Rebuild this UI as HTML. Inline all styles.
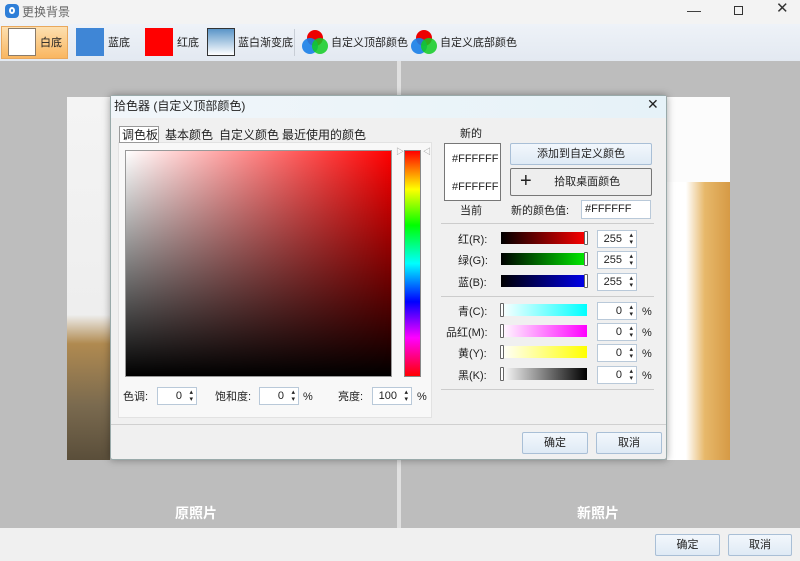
<!DOCTYPE html><html><head><meta charset="utf-8"><style>
*{margin:0;padding:0;box-sizing:border-box}
body{width:800px;height:561px;position:relative;overflow:hidden;font-family:"Liberation Sans","Noto Sans CJK SC",sans-serif;font-size:11px;color:#222;background:#bdbdbd}
.a{position:absolute}
.t{position:absolute;white-space:nowrap;line-height:14px}
.btn{position:absolute;border:1px solid #a9bfd6;background:linear-gradient(#f2f7fc,#dfeaf5);border-radius:2px;text-align:center;font-size:11px}
.spin{position:absolute;background:#fff;border:1px solid #b9c9d9;height:18px;text-align:right;padding-right:14px;line-height:16px;font-size:11px}
.spin:after{content:"▴\A▾";white-space:pre;position:absolute;right:3px;top:1px;font-size:7px;line-height:7px}
.bar{position:absolute;height:12px;width:86px}
.th{position:absolute;width:4px;height:14px;border:1px solid #666;background:#fff;border-radius:1px}
</style></head><body>
<div class="a" style="left:0;top:0;width:800px;height:24px;background:#f3f3f3"></div>
<div class="a" style="left:5px;top:4px;width:14px;height:14px;border-radius:4px;background:#2f7fd8"></div>
<div class="a" style="left:9px;top:7px;width:6px;height:7px;border-radius:50%;border:2px solid #fff"></div>
<div class="t" style="left:22px;top:5px;color:#666;font-size:12px">更换背景</div>
<div class="t" style="left:687px;top:3px;color:#333;font-size:14px">—</div>
<div class="a" style="left:734px;top:6px;width:9px;height:9px;border:1px solid #333"></div>
<div class="t" style="left:776px;top:2px;font-size:15px;color:#333">✕</div>
<div class="a" style="left:0;top:24px;width:800px;height:37px;background:linear-gradient(#eef2f8,#e3e9f1)"></div>
<div class="a" style="left:1px;top:26px;width:67px;height:33px;background:linear-gradient(#fde0b0,#f9b660);border:1px solid #e9a85c"></div>
<div class="a" style="left:8px;top:28px;width:28px;height:28px;background:#fff;border:1px solid #8a7b6a"></div>
<div class="t" style="left:40px;top:36px">白底</div>
<div class="a" style="left:76px;top:28px;width:28px;height:28px;background:#3f86d6"></div>
<div class="t" style="left:108px;top:36px">蓝底</div>
<div class="a" style="left:145px;top:28px;width:28px;height:28px;background:#f00"></div>
<div class="t" style="left:177px;top:36px">红底</div>
<div class="a" style="left:207px;top:28px;width:28px;height:28px;background:linear-gradient(#5a95c8,#fff);border:1px solid #333"></div>
<div class="t" style="left:238px;top:36px">蓝白渐变底</div>
<div class="a" style="left:294px;top:29px;width:1px;height:27px;background:#c8ced6"></div>
<svg class="a" style="left:300px;top:28px" width="30" height="28"><circle cx="15" cy="10" r="8" fill="#e00"/><circle cx="10" cy="18" r="8" fill="#1a7fe8" opacity=".9"/><circle cx="20" cy="18" r="8" fill="#1c2" opacity=".85"/></svg>
<div class="t" style="left:331px;top:36px">自定义顶部颜色</div>
<svg class="a" style="left:409px;top:28px" width="30" height="28"><circle cx="15" cy="10" r="8" fill="#e00"/><circle cx="10" cy="18" r="8" fill="#1a7fe8" opacity=".9"/><circle cx="20" cy="18" r="8" fill="#1c2" opacity=".85"/></svg>
<div class="t" style="left:440px;top:36px">自定义底部颜色</div>
<div class="a" style="left:0;top:61px;width:800px;height:467px;background:#bdbdbd"></div>
<div class="a" style="left:397px;top:61px;width:4px;height:467px;background:#e0e0e0"></div>
<div class="a" style="left:67px;top:97px;width:43px;height:363px;background:linear-gradient(#f4f4f4 0,#eee 60%,#b08a50 68%,#7a6a4f 85%,#5a4e3a 100%)"></div>
<div class="a" style="left:667px;top:97px;width:63px;height:363px;background:linear-gradient(90deg,#fff 30%,#e7b86a 60%,#d69a45 100%)"></div>
<div class="a" style="left:667px;top:97px;width:63px;height:85px;background:#fcfcfc"></div>
<div class="t" style="left:175px;top:505px;color:#fff;font-size:14px;font-weight:bold;line-height:16px">原照片</div>
<div class="t" style="left:577px;top:505px;color:#fff;font-size:14px;font-weight:bold;line-height:16px">新照片</div>
<div class="a" style="left:0;top:528px;width:800px;height:33px;background:#f0f0f0"></div>
<div class="btn" style="left:655px;top:534px;width:65px;height:22px;line-height:20px">确定</div>
<div class="btn" style="left:728px;top:534px;width:64px;height:22px;line-height:20px">取消</div>
<!-- dialog -->
<div class="a" style="left:110px;top:95px;width:557px;height:365px;background:#f0f0f0;border:1px solid #9aa;box-shadow:0 0 8px rgba(0,0,0,.35);border-radius:3px"></div>
<div class="a" style="left:111px;top:96px;width:555px;height:22px;background:linear-gradient(90deg,#f1f6fa,#e6f2f8)"></div>
<div class="t" style="left:114px;top:99px;font-size:12px">拾色器 (自定义顶部颜色)</div>
<div class="t" style="left:647px;top:97px;font-size:14px">✕</div>
<div class="a" style="left:118px;top:142px;width:314px;height:276px;background:#f8f8f8;border:1px solid #e2e2e2"></div>
<div class="a" style="left:119px;top:126px;width:40px;height:17px;border:1px solid #999;background:#fff"></div>
<div class="t" style="left:122px;top:128px;font-size:12px">调色板</div>
<div class="t" style="left:165px;top:128px;font-size:12px">基本颜色</div>
<div class="t" style="left:219px;top:128px;font-size:12px">自定义颜色</div>
<div class="t" style="left:282px;top:128px;font-size:12px">最近使用的颜色</div>
<div class="a" style="left:125px;top:150px;width:267px;height:227px;background:linear-gradient(transparent,#000),linear-gradient(90deg,#fff,#f00);border:1px solid #999"></div>
<div class="a" style="left:404px;top:150px;width:17px;height:227px;background:linear-gradient(#f00,#ff0 17%,#0f0 33%,#0ff 50%,#00f 67%,#f0f 83%,#f00);border:1px solid #888"></div>
<div class="t" style="left:396px;top:145px;font-size:8px;color:#888">▷</div>
<div class="t" style="left:423px;top:145px;font-size:8px;color:#888">◁</div>
<div class="t" style="left:123px;top:390px">色调:</div>
<div class="spin" style="left:157px;top:387px;width:40px">0</div>
<div class="t" style="left:215px;top:390px">饱和度:</div>
<div class="spin" style="left:259px;top:387px;width:40px">0</div>
<div class="t" style="left:303px;top:390px">%</div>
<div class="t" style="left:338px;top:390px">亮度:</div>
<div class="spin" style="left:372px;top:387px;width:40px">100</div>
<div class="t" style="left:417px;top:390px">%</div>
<div class="t" style="left:460px;top:127px">新的</div>
<div class="a" style="left:444px;top:143px;width:57px;height:58px;background:#fff;border:1px solid #777"></div>
<div class="t" style="left:452px;top:152px">#FFFFFF</div>
<div class="t" style="left:452px;top:180px">#FFFFFF</div>
<div class="t" style="left:460px;top:204px">当前</div>
<div class="btn" style="left:510px;top:143px;width:142px;height:22px;line-height:20px">添加到自定义颜色</div>
<div class="btn" style="left:510px;top:168px;width:142px;height:28px;line-height:26px;border-color:#777;background:#eee">&nbsp;&nbsp;&nbsp;&nbsp;拾取桌面颜色</div>
<div class="t" style="left:520px;top:171px;font-size:20px;line-height:20px">+</div>
<div class="t" style="left:511px;top:204px">新的颜色值:</div>
<div class="a" style="left:581px;top:200px;width:70px;height:19px;background:#fff;border:1px solid #b9c9d9;padding:2px 3px">#FFFFFF</div>
<div class="a" style="left:441px;top:223px;width:213px;height:1px;background:#ccc"></div>
<div class="t" style="left:458px;top:233px">红(R):</div>
<div class="bar" style="left:501px;top:232px;background:linear-gradient(90deg,#000,#f00)"></div><div class="th" style="left:584px;top:231px"></div>
<div class="spin" style="left:597px;top:230px;width:40px">255</div>
<div class="t" style="left:458px;top:254px">绿(G):</div>
<div class="bar" style="left:501px;top:253px;background:linear-gradient(90deg,#000,#0e0)"></div><div class="th" style="left:584px;top:252px"></div>
<div class="spin" style="left:597px;top:251px;width:40px">255</div>
<div class="t" style="left:458px;top:276px">蓝(B):</div>
<div class="bar" style="left:501px;top:275px;background:linear-gradient(90deg,#000,#00e)"></div><div class="th" style="left:584px;top:274px"></div>
<div class="spin" style="left:597px;top:273px;width:40px">255</div>
<div class="a" style="left:441px;top:296px;width:213px;height:1px;background:#ccc"></div>
<div class="t" style="left:458px;top:305px">青(C):</div>
<div class="bar" style="left:501px;top:304px;background:linear-gradient(90deg,#fff,#0ff)"></div><div class="th" style="left:500px;top:303px"></div>
<div class="spin" style="left:597px;top:302px;width:40px">0</div><div class="t" style="left:642px;top:305px">%</div>
<div class="t" style="left:446px;top:326px">品红(M):</div>
<div class="bar" style="left:501px;top:325px;background:linear-gradient(90deg,#fff,#f0f)"></div><div class="th" style="left:500px;top:324px"></div>
<div class="spin" style="left:597px;top:323px;width:40px">0</div><div class="t" style="left:642px;top:326px">%</div>
<div class="t" style="left:458px;top:347px">黄(Y):</div>
<div class="bar" style="left:501px;top:346px;background:linear-gradient(90deg,#fff,#ff0)"></div><div class="th" style="left:500px;top:345px"></div>
<div class="spin" style="left:597px;top:344px;width:40px">0</div><div class="t" style="left:642px;top:347px">%</div>
<div class="t" style="left:458px;top:369px">黑(K):</div>
<div class="bar" style="left:501px;top:368px;background:linear-gradient(90deg,#fff,#000)"></div><div class="th" style="left:500px;top:367px"></div>
<div class="spin" style="left:597px;top:366px;width:40px">0</div><div class="t" style="left:642px;top:369px">%</div>
<div class="a" style="left:441px;top:389px;width:213px;height:1px;background:#ccc"></div>
<div class="a" style="left:111px;top:424px;width:555px;height:1px;background:#d0d0d0"></div>
<div class="btn" style="left:522px;top:432px;width:66px;height:22px;line-height:20px">确定</div>
<div class="btn" style="left:596px;top:432px;width:66px;height:22px;line-height:20px">取消</div>
</body></html>
